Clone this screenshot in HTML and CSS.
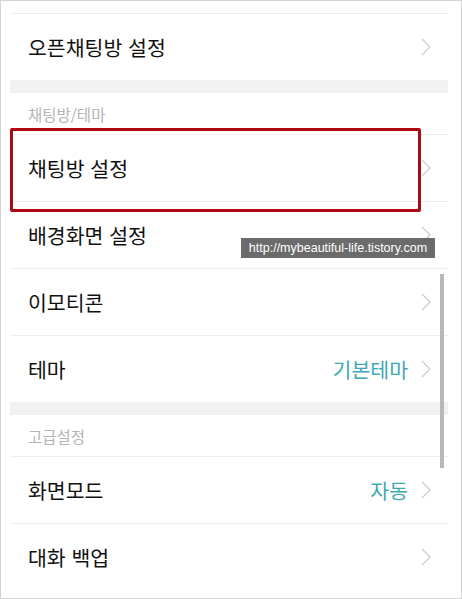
FILE: index.html
```html
<!DOCTYPE html>
<html lang="ko">
<head>
    <meta charset="UTF-8">
    <meta name="viewport" content="width=device-width, initial-scale=1.0">
    <title>채팅방 설정</title>
    <link rel="stylesheet" href="styles.css">
</head>
<body>
    <div class="screen">
        <div class="list">
            <div class="row">
                <span class="label">오픈채팅방 설정</span>
                <svg class="chev" width="10" height="18" viewBox="0 0 10 18"><polyline points="1,1 9,9 1,17"/></svg>
            </div>
            <div class="band"></div>
            <div class="header">채팅방/테마</div>
            <div class="row">
                <span class="label">채팅방 설정</span>
                <svg class="chev" width="10" height="18" viewBox="0 0 10 18"><polyline points="1,1 9,9 1,17"/></svg>
            </div>
            <div class="row">
                <span class="label">배경화면 설정</span>
                <svg class="chev" width="10" height="18" viewBox="0 0 10 18"><polyline points="1,1 9,9 1,17"/></svg>
            </div>
            <div class="row">
                <span class="label">이모티콘</span>
                <svg class="chev" width="10" height="18" viewBox="0 0 10 18"><polyline points="1,1 9,9 1,17"/></svg>
            </div>
            <div class="row">
                <span class="label">테마</span>
                <span class="value">기본테마</span>
                <svg class="chev" width="10" height="18" viewBox="0 0 10 18"><polyline points="1,1 9,9 1,17"/></svg>
            </div>
            <div class="band"></div>
            <div class="header">고급설정</div>
            <div class="row">
                <span class="label">화면모드</span>
                <span class="value">자동</span>
                <svg class="chev" width="10" height="18" viewBox="0 0 10 18"><polyline points="1,1 9,9 1,17"/></svg>
            </div>
            <div class="row">
                <span class="label">대화 백업</span>
                <svg class="chev" width="10" height="18" viewBox="0 0 10 18"><polyline points="1,1 9,9 1,17"/></svg>
            </div>
        </div>

        <!-- 겹쳐지는 요소들 -->
        <div class="highlight"></div>
        <div class="scrollbar"></div>
        <div class="watermark">http://mybeautiful-life.tistory.com</div>
    </div>
</body>
</html>
```

FILE: styles.css
```css
body {
    margin: 0;
    background-color: #ffffff;
    font-family: "Noto Sans CJK KR", "Noto Sans", sans-serif;
}
.screen {
    position: relative;
    width: 462px;
    height: 599px;
    box-sizing: border-box;
    border: 1px solid #d4d4d4;
    overflow: hidden;
    padding: 12px 13px 0 9px;
}
.list {
    display: flex;
    flex-direction: column;
}
.row {
    display: flex;
    align-items: center;
    height: 66px;
    border-top: 1px solid #eeeeee;
    padding: 0 17px 0 18px;
}
.label {
    flex: 1;
    font-size: 20.5px;
    color: #111111;
}
.value {
    font-size: 20.5px;
    color: #3fa9b3;
    margin-right: 13px;
}
.chev {
    flex: none;
}
.chev polyline {
    fill: none;
    stroke: #cfcfcf;
    stroke-width: 1.4;
}
.band {
    height: 13px;
    background-color: #f1f1f1;
}
.header {
    height: 41px;
    display: flex;
    align-items: center;
    padding-left: 18px;
    font-size: 15.5px;
    color: #b4b4b4;
}
.highlight {
    position: absolute;
    left: 9px;
    top: 127px;
    width: 411px;
    height: 84px;
    box-sizing: border-box;
    border: 3px solid #b00812;
    border-radius: 2px;
}
.scrollbar {
    position: absolute;
    left: 439px;
    top: 273px;
    width: 4px;
    height: 194px;
    background-color: #b8b8b8;
}
.watermark {
    position: absolute;
    left: 240px;
    top: 237px;
    width: 194px;
    height: 20px;
    line-height: 20px;
    background-color: #6b6b6b;
    color: #ffffff;
    font-family: "Liberation Sans", Arial, sans-serif;
    font-size: 12.5px;
    text-align: center;
}
```
